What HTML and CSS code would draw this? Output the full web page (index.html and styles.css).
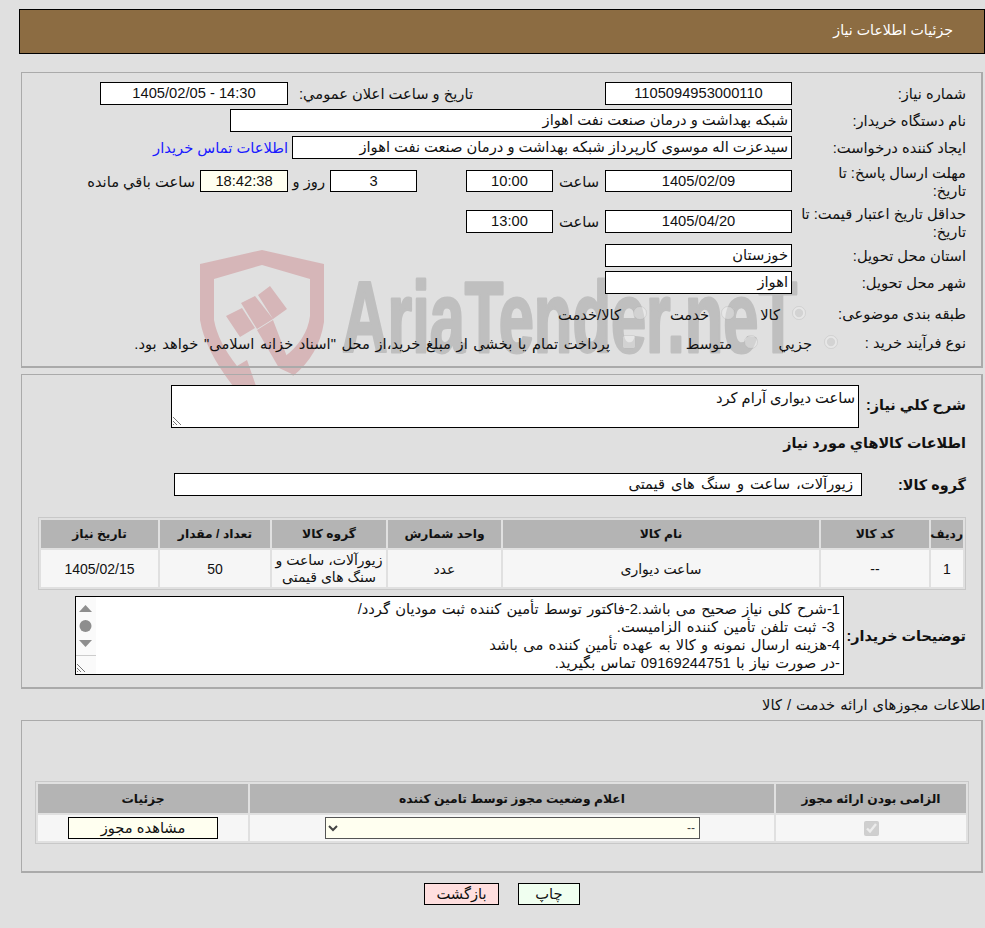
FILE: index.html
```html
<!DOCTYPE html>
<html lang="fa" dir="rtl">
<head>
<meta charset="utf-8">
<title>جزئیات اطلاعات نیاز</title>
<link rel="stylesheet" href="styles.css">
</head>
<body>
<svg class="watermark" width="610" height="136" viewBox="0 0 610 136" aria-hidden="true">
  <path class="wm-red" d="M1 14 L63 0 L125 14 L125 72 Q120 105 94 126 L84 108 Q108 90 111 66 L111 29 L63 15 L15 29 L15 70 Q19 92 38 116 L48 110 L57 136 L34 136 Q6 100 1 70 Z"/>
  <path class="wm-red" d="M27 66 L43 58 L56 78 L41 87 Z M42 53 L56 46 L74 69 L58 79 Z M59 45 L71 36 L88 59 L74 69 Z M58 80 L74 70 L95 125 L80 118 Z"/>
  <text class="wm-text" x="143" y="102" textLength="455" lengthAdjust="spacingAndGlyphs">AriaTender.neT</text>
</svg>
<header class="title-bar">جزئیات اطلاعات نیاز</header>

<section class="panel panel-main">
  <div class="row">
    <span class="label">شماره نیاز:</span>
    <span class="box w-date">1105094953000110</span>
    <span class="label-inline announce">تاریخ و ساعت اعلان عمومي:</span>
    <span class="box w-announce" dir="ltr">1405/02/05 - 14:30</span>
  </div>
  <div class="row">
    <span class="label">نام دستگاه خریدار:</span>
    <span class="box start w-buyer">شبکه بهداشت و درمان صنعت نفت اهواز</span>
  </div>
  <div class="row">
    <span class="label">ایجاد کننده درخواست:</span>
    <span class="box start w-creator">سیدعزت اله موسوی کارپرداز شبکه بهداشت و درمان صنعت نفت اهواز</span>
    <a class="contact" href="#">اطلاعات تماس خریدار</a>
  </div>
  <div class="row row-deadline">
    <span class="label">مهلت ارسال پاسخ: تا تاریخ:</span>
    <span class="box w-date">1405/02/09</span>
    <span class="hour">ساعت</span>
    <span class="box w-time">10:00</span>
    <span class="box w-days">3</span>
    <span class="label-inline days-label">روز و</span>
    <span class="box w-time-left">18:42:38</span>
    <span class="label-inline">ساعت باقي مانده</span>
  </div>
  <div class="row row-validity">
    <span class="label">حداقل تاریخ اعتبار قیمت: تا تاریخ:</span>
    <span class="box w-date">1405/04/20</span>
    <span class="hour">ساعت</span>
    <span class="box w-time">13:00</span>
  </div>
  <div class="row">
    <span class="label">استان محل تحویل:</span>
    <span class="box start w-date">خوزستان</span>
  </div>
  <div class="row">
    <span class="label">شهر محل تحویل:</span>
    <span class="box start w-date">اهواز</span>
  </div>
  <div class="row row-radio row-radio-first">
    <span class="label label-subject">طبقه بندی موضوعی:</span>
    <span class="radio-item r1"><input type="radio" name="t" disabled checked>کالا</span>
    <span class="radio-item r2"><input type="radio" name="t" disabled>خدمت</span>
    <span class="radio-item"><input type="radio" name="t" disabled>کالا/خدمت</span>
  </div>
  <div class="row row-radio">
    <span class="label label-process">نوع فرآیند خرید :</span>
    <span class="radio-item r4"><input type="radio" name="p" disabled checked>جزیي</span>
    <span class="radio-item r5"><input type="radio" name="p" disabled>متوسط</span>
    <span class="radio-item treasury"><input type="checkbox" disabled>پرداخت تمام یا بخشی از مبلغ خرید،از محل "اسناد خزانه اسلامی" خواهد بود.</span>
  </div>
</section>

<section class="panel panel-items">
  <div class="desc-row">
    <span class="strong-label">شرح کلي نیاز:</span>
    <div class="area area-desc">ساعت دیواری آرام کرد<svg class="grip" width="10" height="10" viewBox="0 0 10 10"><path d="M1 1 L9 9 M1 5 L5 9 M1 8 L2 9"/></svg></div>
  </div>
  <h2 class="section-title">اطلاعات کالاهاي مورد نیاز</h2>
  <div class="group-row">
    <span class="strong-label">گروه کالا:</span>
    <span class="box start w-group">زیورآلات، ساعت و سنگ های قیمتی</span>
  </div>
  <table class="grid items">
    <thead>
      <tr><th class="c-idx">ردیف</th><th class="c-code">کد کالا</th><th class="c-name">نام کالا</th><th class="c-unit">واحد شمارش</th><th class="c-group">گروه کالا</th><th class="c-qty">تعداد / مقدار</th><th>تاریخ نیاز</th></tr>
    </thead>
    <tbody>
      <tr><td>1</td><td>--</td><td>ساعت دیواری</td><td>عدد</td><td class="tight">زیورآلات، ساعت و سنگ های قیمتی</td><td>50</td><td>1405/02/15</td></tr>
    </tbody>
  </table>
  <div class="notes-row">
    <span class="strong-label">توضیحات خریدار:</span>
    <div class="area area-notes">
      <div class="notes-text">
        <div>1-شرح کلی نیاز صحیح می باشد.2-فاکتور توسط تأمین کننده ثبت مودیان گردد/</div>
        <div>&nbsp;3- ثبت تلفن تأمین کننده الزامیست.</div>
        <div>4-هزینه ارسال نمونه و کالا به عهده تأمین کننده می باشد</div>
        <div>-در صورت نیاز با 09169244751 تماس بگیرید.</div>
      </div>
      <div class="scroll">
        <svg width="20" height="78" viewBox="0 0 20 78">
          <path class="sc" d="M9.500 8 L16 15 L3 15 Z"/>
          <circle class="sc" cx="9.500" cy="29" r="6"/>
          <path class="sc" d="M3 43 L16 43 L9.500 50 Z"/>
          <path class="sc-line" d="M0 58.500 H20"/>
          <path class="grip-path" d="M1 67 L9 75 M1 71 L5 75 M1 74 L2 75"/>
        </svg>
      </div>
    </div>
  </div>
</section>

<h3 class="license-title">اطلاعات مجوزهای ارائه خدمت / کالا</h3>

<section class="panel panel-license">
  <table class="grid license">
    <thead>
      <tr><th class="c-must">الزامی بودن ارائه مجوز</th><th class="c-status">اعلام وضعیت مجوز توسط تامین کننده</th><th>جزئیات</th></tr>
    </thead>
    <tbody>
      <tr>
        <td><input class="check" type="checkbox" checked disabled></td>
        <td><select class="status"><option>--</option></select></td>
        <td><button class="btn btn-view" type="button">مشاهده مجوز</button></td>
      </tr>
    </tbody>
  </table>
</section>

<footer class="actions">
  <button class="btn btn-print" type="button">چاپ</button>
  <button class="btn btn-back" type="button">بازگشت</button>
</footer>
</body>
</html>
```
FILE: styles.css
```css
* { box-sizing: border-box; }
html, body { height: 100%; }
body {
  margin: 0;
  padding: 9px 0 0;
  background: #e0e0e0;
  font-family: "Liberation Sans", "DejaVu Sans", sans-serif;
  font-size: 14.7px;
  color: #111;
  position: relative;
  overflow: hidden;
}
.watermark { position: absolute; left: 199px; top: 250px; direction: ltr; }
.wm-red { fill: #d6b6b8; }
.wm-text { fill: #bfbfbf; stroke: #bfbfbf; stroke-width: 3; stroke-linejoin: round; font-family: "Liberation Sans", sans-serif; font-weight: 700; font-size: 100px; }

.title-bar {
  position: relative;
  margin: 0 0 0 19px;
  height: 45px;
  padding: 0 31px;
  line-height: 41px;
  background: #8c6c42;
  border: 1px solid #000;
  color: #fff;
  font-size: 14.2px;
}
.panel { position: relative; margin: 0 2px 0 21px; border: 2px solid #aaa; border-width: 1px 2px 2px 1px; }
.panel-main { margin-top: 18px; height: 296px; padding-top: 9px; }
.panel-items { margin-top: 6px; height: 315px; }
.panel-license { margin-top: 6px; height: 153px; padding: 60px 12px 0 13px; }

.row { display: flex; align-items: center; height: 23px; margin-bottom: 4px; padding-right: 15px; }
.row-deadline { height: 22px; margin: 11px 0 18px; }
.row-deadline .box { height: 22px; }
.row-validity { margin-bottom: 11px; }
.row-radio { height: 22px; margin-bottom: 7px; }
.row-radio-first { margin-top: 9px; }
.label { width: 174px; flex: none; padding-left: 6px; line-height: 18px; }
.row-deadline .label, .row-validity .label { margin-top: 2px; }
.row-deadline .label { padding-left: 14px; }
.label-subject { width: 160px; padding-left: 0; }
.label-process { width: 128px; padding-left: 0; }
.label-inline { margin: 0 5px; white-space: nowrap; }
.announce { width: 180px; flex: none; margin: 0 132px 0 5px; }
.days-label { width: 28px; flex: none; margin: 0 5px 0 9px; }
.hour { width: 52px; flex: none; text-align: center; white-space: nowrap; }

.box {
  display: block;
  flex: none;
  height: 23px;
  line-height: 21px;
  border: 1px solid #000;
  background: #fff;
  text-align: center;
  white-space: nowrap;
  overflow: hidden;
}
.start { text-align: right; padding: 0 3px; }
.w-date { width: 187px; }
.w-announce { width: 188px; }
.w-buyer { width: 562px; }
.w-creator { width: 500px; }
.w-time { width: 87px; }
.w-days { width: 87px; margin-right: 49px; }
.w-time-left { width: 88px; background: #fffff0; }
.w-group { width: 688px; padding-left: 0; padding-right: 8px; word-spacing: 2px; }

.contact { color: #1a1aff; text-decoration: none; margin-right: 4px; white-space: nowrap; }

.radio-item { display: inline-flex; align-items: center; gap: 12px; white-space: nowrap; flex: none; }
.radio-item input { margin: -3px 0 0; width: 14px; height: 14px; opacity: .55; }
.r1 { width: 71px; }
.r2 { width: 88px; }
.r4 { width: 80px; }
.r5 { width: 122px; }
.treasury { word-spacing: 1.5px; }

.desc-row { display: flex; align-items: flex-start; padding: 10px 15px 0 0; }
.strong-label { font-weight: 700; font-size: 14.4px; white-space: nowrap; }
.desc-row .strong-label { margin-top: 12px; width: 107px; }
.area { position: relative; background: #fff; border: 1px solid #000; }
.area-desc { width: 688px; height: 43px; padding: 3px 3px; }
.grip { position: absolute; left: 0; bottom: 1px; }
.grip path { stroke: #777; stroke-width: 1; fill: none; }

.section-title { margin: 4px 15px 0 0; font-size: 14.4px; font-weight: 700; line-height: 22px; }
.group-row { display: flex; align-items: center; margin-top: 19px; padding-right: 15px; }
.group-row .strong-label { width: 104px; }

.grid { border-collapse: separate; border-spacing: 2px; background: #e0e0e0; border: 1px solid #c8c8c8; table-layout: fixed; }
.grid th { background: #b4b4b4; height: 28px; padding: 0; font-size: 12.3px; font-weight: 700; }
.grid td { background: #f6f6f6; padding: 0; text-align: center; font-size: 14px; }
.items { width: 928px; margin: 21px 15px 0 0; }
.items td { height: 37px; }
.c-idx { width: 32px; }
.c-code { width: 108px; }
.c-name { width: 316px; }
.c-unit { width: 113px; }
.c-group { width: 114px; }
.c-qty { width: 110px; }
.tight { line-height: 17px; }

.notes-row { display: flex; align-items: center; padding-right: 15px; margin-top: 6px; }
.notes-row .strong-label { width: 122px; }
.area-notes { display: flex; width: 769px; height: 79px; overflow: hidden; }
.notes-text { flex: 1; padding: 3px 3px 0; line-height: 18px; white-space: nowrap; word-spacing: 1.2px; }
.scroll { width: 20px; flex: none; background: #fafafa; }
.scroll svg { display: block; }
.sc { fill: #8e8e8e; }
.sc-line { stroke: #ccc; fill: none; }
.grip-path { stroke: #777; fill: none; }

.license-title { margin: 8px 0 0; height: 17px; font-size: 14.7px; font-weight: 400; line-height: 17px; white-space: nowrap; word-spacing: 1px; }
.license { width: 934px; }
.c-must { width: 190px; }
.c-status { width: 524px; }
.license th { height: 29px; }
.license td { height: 26px; }
.check { margin: 0 auto; display: block; width: 15px; height: 15px; }
.status { width: 375px; height: 22px; background: #fffff0; border: 1px solid #555; color: #444; font: inherit; font-size: 12px; display: block; margin: 0 74px 0 auto; }

.btn { height: 22px; border: 1px solid #000; font: inherit; font-size: 14.7px; line-height: 18px; padding: 0; color: #111; }
.btn-view { width: 150px; background: #fffff0; display: block; margin: 0 auto; }
.actions { display: flex; justify-content: center; gap: 19px; margin-top: 10px; padding-left: 19px; }
.btn-print { width: 62px; background: #f0fff0; }
.btn-back { width: 75px; background: #ffdfdf; }
```
